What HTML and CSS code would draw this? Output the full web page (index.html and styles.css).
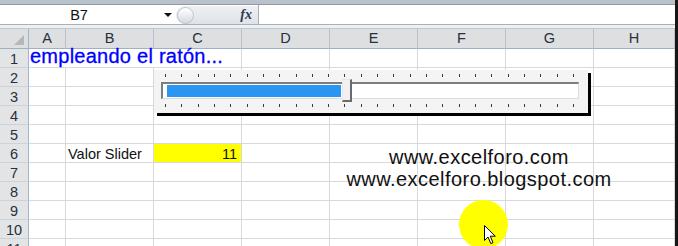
FILE: index.html
```html
<!doctype html>
<html lang="es">
<head>
  <meta charset="utf-8">
  <title>Slider - excelforo</title>
  <link rel="stylesheet" href="styles.css">
</head>
<body>
  <div class="window">
    <div class="topband"></div>

    <div class="formula-bar">
      <div class="name-box">
        <span class="name">B7</span>
        <span class="drop"></span>
      </div>
      <div class="fx-area">
        <span class="grip"></span>
        <span class="fx">fx</span>
      </div>
      <div class="formula-input"></div>
    </div>
    <div class="sep"></div>

    <table class="grid">
      <colgroup>
        <col class="c-head">
        <col class="c-a">
        <col class="c-std" span="6">
        <col class="c-h">
      </colgroup>
      <thead>
        <tr>
          <th class="corner"><span class="tri"></span></th>
          <th>A</th><th>B</th><th>C</th><th>D</th><th>E</th><th>F</th><th>G</th><th>H</th>
        </tr>
      </thead>
      <tbody>
        <tr><th>1</th><td colspan="3" class="title">empleando el ratón...</td><td></td><td></td><td></td><td></td><td></td></tr>
        <tr><th>2</th><td></td><td></td><td></td><td></td><td></td><td></td><td></td><td></td></tr>
        <tr><th>3</th><td></td><td></td><td></td><td></td><td></td><td></td><td></td><td></td></tr>
        <tr><th>4</th><td></td><td></td><td></td><td></td><td></td><td></td><td></td><td></td></tr>
        <tr><th>5</th><td></td><td></td><td></td><td></td><td></td><td></td><td></td><td></td></tr>
        <tr><th>6</th><td></td><td class="label">Valor Slider</td><td class="value">11</td><td></td><td></td><td></td><td></td><td></td></tr>
        <tr><th>7</th><td></td><td></td><td></td><td></td><td></td><td></td><td></td><td></td></tr>
        <tr><th>8</th><td></td><td></td><td></td><td></td><td></td><td></td><td></td><td></td></tr>
        <tr><th>9</th><td></td><td></td><td></td><td></td><td></td><td></td><td></td><td></td></tr>
        <tr><th>10</th><td></td><td></td><td></td><td></td><td></td><td></td><td></td><td></td></tr>
        <tr><th>11</th><td></td><td></td><td></td><td></td><td></td><td></td><td></td><td></td></tr>
      </tbody>
    </table>

    <!-- floating scrollbar control -->
    <div class="slider">
      <div class="ticks">
        <i></i><i></i><i></i><i></i><i></i><i></i><i></i><i></i><i></i><i></i><i></i><i></i><i></i>
        <i></i><i></i><i></i><i></i><i></i><i></i><i></i><i></i><i></i><i></i><i></i><i></i><i></i>
      </div>
      <div class="track">
        <div class="fill"></div>
      </div>
      <div class="ticks">
        <i></i><i></i><i></i><i></i><i></i><i></i><i></i><i></i><i></i><i></i><i></i><i></i><i></i>
        <i></i><i></i><i></i><i></i><i></i><i></i><i></i><i></i><i></i><i></i><i></i><i></i><i></i>
      </div>
      <div class="thumb"></div>
    </div>

    <div class="textbox">
      www.excelforo.com<br>
      www.excelforo.blogspot.com
    </div>

    <div class="pointer">
      <svg class="cursor" width="13" height="20" viewBox="0 0 13 20">
        <path d="M0.5 0.5 L0.5 15.5 L4 12 L6.8 18.6 L9 17.6 L6.3 11.2 L11.3 11.2 Z" fill="#fff" stroke="#000" stroke-width="1" stroke-linejoin="miter"/>
      </svg>
    </div>
  </div>
</body>
</html>
```

FILE: styles.css
```css
body {
  margin: 0;
  width: 678px;
  height: 246px;
  overflow: hidden;
  background: #fff;
  font-family: "Liberation Sans", Arial, sans-serif;
}

.window {
  position: relative;
  width: 675px;
  height: 246px;
  border-right: 3px solid #161616;
  overflow: hidden;
}

.topband {
  height: 4px;
  background: #b9c1ca;
  border-bottom: 1px solid #8e99a4;
}

.formula-bar {
  display: flex;
  height: 19px;
  background: #fff;
  border-bottom: 1px solid #a7b1bb;
}
.name-box {
  width: 176px;
  display: flex;
  align-items: center;
  font-size: 14.5px;
  color: #111;
}
.name-box .name {
  width: 158px;
  text-align: center;
  padding-top: 1px;
}
.name-box .drop {
  width: 0;
  height: 0;
  margin-left: 6px;
  margin-top: 1px;
  border-left: 4px solid transparent;
  border-right: 4px solid transparent;
  border-top: 4px solid #111;
}
.fx-area {
  width: 82px;
  margin-top: 1px;
  display: flex;
  align-items: center;
  justify-content: space-between;
  background: linear-gradient(#eef0f3, #dfe3e8);
  border-top-left-radius: 9px;
  border-bottom-left-radius: 9px;
}
.grip {
  width: 15px;
  height: 15px;
  margin-left: 1px;
  border-radius: 50%;
  border: 1px solid #bcc4cc;
  background: linear-gradient(#ffffff, #d6dbe1);
}
.fx {
  font-family: "Liberation Serif", serif;
  font-style: italic;
  font-weight: bold;
  font-size: 14px;
  color: #2e3a52;
  margin-right: 6px;
}
.formula-input {
  flex: 1;
  border-left: 1px solid #a7b1bb;
}

.sep {
  height: 3px;
  background: #eef1f4;
  border-bottom: 1px solid #bfc7cf;
}

/* sheet */
.grid {
  table-layout: fixed;
  width: 675px;
  border-collapse: separate;
  border-spacing: 0;
}
.c-head { width: 29px; }
.c-a { width: 37px; }
.c-std { width: 88px; }
.c-h { width: 81px; }

.grid th,
.grid td {
  box-sizing: border-box;
  padding: 0;
  white-space: nowrap;
  overflow: visible;
}
.grid thead th {
  height: 20px;
  font-weight: normal;
  font-size: 14.5px;
  line-height: 19px;
  color: #27303d;
  background: #dedfe0;
  border-right: 1px solid #b9c2cc;
  border-bottom: 1px solid #9fb0c2;
}
.grid thead th.corner {
  position: relative;
  border-right-color: #9eb6ce;
}
.tri {
  position: absolute;
  right: 4px;
  bottom: 3px;
  width: 0;
  height: 0;
  border-left: 10px solid transparent;
  border-bottom: 10px solid #b5b8bb;
}
.grid tbody th {
  height: 19px;
  font-weight: normal;
  font-size: 14.5px;
  line-height: 15px;
  padding-top: 3px;
  vertical-align: top;
  color: #27303d;
  background: #e3e4e5;
  border-right: 1px solid #9eb6ce;
  border-bottom: 1px solid #cdd2d8;
}
.grid td {
  height: 19px;
  padding: 3px 4px 0;
  line-height: 15px;
  font-size: 14.5px;
  vertical-align: top;
  color: #111;
  border-right: 1px solid #d9d9d9;
  border-bottom: 1px solid #d9d9d9;
}
.grid td.title {
  padding: 0 1px;
  font-size: 20px;
  letter-spacing: 0.25px;
  color: #0000ff;
  -webkit-text-stroke: 0.3px #0000ff;
}
.grid td.label {
  padding-left: 2px;
}
.grid td.value {
  background: #ffff00;
  text-align: right;
}

/* scrollbar form control */
.slider {
  position: absolute;
  left: 154px;
  top: 70px;
  width: 434px;
  height: 43px;
  box-sizing: border-box;
  padding: 4px 9px 0 7px;
  background: #f4f4f4;
  box-shadow: 3px 3px 0 #000;
}
.ticks {
  display: flex;
  justify-content: space-between;
  height: 3px;
  padding: 0 5px 0 4px;
}
.ticks i {
  width: 1px;
  height: 3px;
  background: #3c3c3c;
}
.track {
  height: 17px;
  margin: 5px 0;
  box-sizing: border-box;
  padding: 1px 0 1px 4px;
  background: #fff;
  border-top: 2px solid #7d7d7d;
  border-left: 2px solid #7d7d7d;
  border-bottom: 1px solid #dcdcdc;
  border-right: 1px solid #dcdcdc;
}
.fill {
  width: 174px;
  height: 12px;
  background: #2b96f1;
}
.thumb {
  position: absolute;
  left: 188px;
  top: 9px;
  width: 10px;
  height: 23px;
  box-sizing: border-box;
  background: #f0f0f0;
  border-top: 1px solid #e6e6e6;
  border-left: 1px solid #e6e6e6;
  border-right: 2px solid #6a6a6a;
  border-bottom: 2px solid #6a6a6a;
}

.textbox {
  position: absolute;
  left: 340px;
  top: 146px;
  width: 278px;
  text-align: center;
  font-size: 20px;
  line-height: 22.4px;
  letter-spacing: 0.45px;
  color: #111;
  white-space: nowrap;
}

.pointer {
  position: absolute;
  left: 459px;
  top: 200px;
  width: 49px;
  height: 49px;
  border-radius: 50%;
  background: #ffff00;
}
.cursor {
  position: absolute;
  left: 25px;
  top: 25px;
}
```
